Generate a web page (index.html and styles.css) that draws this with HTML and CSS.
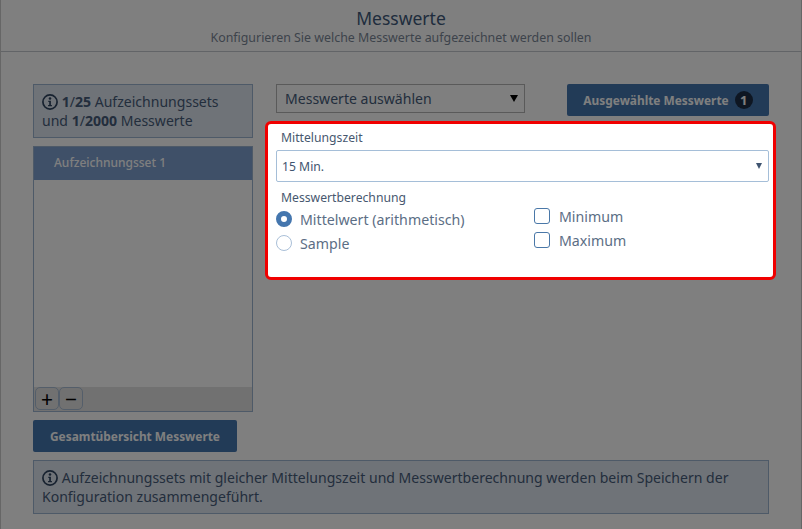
FILE: index.html
```html
<!DOCTYPE html>
<html lang="de">
<head>
<meta charset="utf-8">
<title>Messwerte</title>
<link rel="stylesheet" href="styles.css">
</head>
<body>
<div class="page">
  <header class="head">
    <h1 class="title">Messwerte</h1>
    <p class="subtitle">Konfigurieren Sie welche Messwerte aufgezeichnet werden sollen</p>
  </header>
  <main class="main">
    <div class="cols">
      <aside class="left">
        <div class="info info-top">
          <svg class="info-icon" viewBox="1 1 14 14"><circle cx="8" cy="8" r="6.2" fill="none" stroke="currentColor" stroke-width="1.5"/><circle cx="8" cy="5" r="1.1" fill="currentColor"/><path d="M6.5 7h2.3v3.6h.9v1.1H6.3v-1.1h1V8.1h-.8z" fill="currentColor"/></svg>
          <b>1</b>/<b>25</b> Aufzeichnungssets<br>und <b>1</b>/<b>2000</b> Messwerte
        </div>
        <div class="sets">
          <div class="set-active">Aufzeichnungsset 1</div>
          <div class="set-list"></div>
          <div class="set-foot">
            <button class="sq">+</button><button class="sq">−</button>
          </div>
        </div>
        <button class="btn btn-wide">Gesamtübersicht Messwerte</button>
      </aside>
      <section class="right">
        <div class="top-row">
          <div class="select-plain"><span>Messwerte auswählen</span><span class="caret caret-big"></span></div>
          <button class="btn btn-sel">Ausgewählte Messwerte <span class="badge">1</span></button>
        </div>
        <div class="panel">
          <div class="lbl">Mittelungszeit</div>
          <div class="select-white"><span>15 Min.</span><span class="caret"></span></div>
          <div class="lbl lbl2">Messwertberechnung</div>
          <div class="opts">
            <div class="opt-col">
              <div class="opt"><span class="radio radio-on"></span>Mittelwert (arithmetisch)</div>
              <div class="opt"><span class="radio"></span>Sample</div>
            </div>
            <div class="opt-col col-check">
              <div class="opt opt-c"><span class="check"></span>Minimum</div>
              <div class="opt opt-c"><span class="check"></span>Maximum</div>
            </div>
          </div>
        </div>
      </section>
    </div>
    <div class="info info-bottom">
      <svg class="info-icon" viewBox="1 1 14 14"><circle cx="8" cy="8" r="6.2" fill="none" stroke="currentColor" stroke-width="1.5"/><circle cx="8" cy="5" r="1.1" fill="currentColor"/><path d="M6.5 7h2.3v3.6h.9v1.1H6.3v-1.1h1V8.1h-.8z" fill="currentColor"/></svg>
      Aufzeichnungssets mit gleicher Mittelungszeit und Messwertberechnung werden beim Speichern der Konfiguration zusammengeführt.
    </div>
  </main>
</div>
<div class="overlay"></div>
</body>
</html>
```
FILE: styles.css
```css
* { box-sizing: border-box; }
html, body { margin: 0; padding: 0; height: 100%; }
body {
  background: #fff;
  font-family: "Noto Sans", sans-serif;
  color: #465c7a;
  overflow: hidden;
}
.overlay { position: fixed; inset: 0; background: rgba(0, 0, 0, .5); z-index: 1; }
.page { height: 529px; border-left: 1px solid #ccc; border-right: 1px solid #ccc; }
.head { height: 52px; border-bottom: 1px solid #c4c9cf; text-align: center; padding-top: 7px; }
.title { margin: 0; font-size: 17.5px; line-height: 22px; font-weight: 400; color: #40597a; }
.subtitle { margin: 0; padding-top: 1px; font-size: 12.4px; line-height: 16px; color: #7b8797; }
.main { padding: 32px 32px 0; }
.cols { display: flex; height: 368px; }
.left { width: 220px; flex: none; display: flex; flex-direction: column; }
.right { flex: 1; margin-left: 23px; min-width: 0; }
.info { background: #dfe6f0; border: 1px solid #9db5d0; font-size: 14.05px; line-height: 19px; color: #465c7a; }
.info-top { height: 54px; padding: 7px 8px; }
.info-icon { width: 16px; height: 16px; vertical-align: -3px; color: #2f4560; }
b { font-weight: 700; }
.sets { margin-top: 8px; height: 266px; border: 1px solid #9db5d0; display: flex; flex-direction: column; }
.set-active { height: 33px; background: #7ea0d0; color: #fff; font-size: 12px; font-weight: 500; line-height: 31px; padding-left: 20px; flex: none; }
.set-list { flex: 1; background: #fff; }
.set-foot { height: 24px; background: #e2e2e2; display: flex; padding-left: 1px; }
.sq { width: 24px; height: 23px; padding: 0; border: 1px solid #a9bdd5; border-radius: 5px; background: #e2e2e2; color: #000; font: 400 21px/20px "Noto Sans", sans-serif; }
.btn { border: 0; border-radius: 2px; background: #4476ae; color: #fff; font-family: inherit; font-weight: 700; font-size: 11.9px; padding: 0; }
.btn-wide { margin-top: 8px; width: 204px; height: 32px; }
.top-row { display: flex; justify-content: space-between; align-items: flex-start; height: 37px; }
.select-plain { width: 249px; height: 29px; border: 1px solid #b4b4b4; padding: 0 6px 1px 8px; display: flex; justify-content: space-between; align-items: center; font-size: 14.05px; }
.caret { width: 0; height: 0; border-left: 3.5px solid transparent; border-right: 3.5px solid transparent; border-top: 6px solid #3f5470; }
.caret-big { border-left-width: 4px; border-right-width: 4px; border-top: 7px solid #000; }
.btn-sel { width: 202px; height: 32px; display: flex; align-items: center; justify-content: center; gap: 6px; }
.badge { width: 18px; height: 18px; border-radius: 50%; background: #1d2d44; color: #fff; font-size: 13px; line-height: 18px; text-align: center; }
.panel {
  position: relative; z-index: 2;
  margin: 0 -7px 0 -11px;
  height: 159px;
  background: #fff;
  border: 3px solid #f00000;
  border-radius: 6px;
  padding: 5px 4px 0 8px;
}
.lbl { font-size: 12.2px; line-height: 18px; padding-left: 5px; color: #47586f; }
.select-white { height: 32px; margin-top: 3px; border: 1px solid #a5bed8; border-radius: 2px; padding: 0 6px 0 5px; display: flex; justify-content: space-between; align-items: center; font-size: 12.2px; color: #3f5470; }
.lbl2 { margin-top: 7px; }
.opts { display: flex; }
.opt-col { width: 258px; flex: none; }
.col-check { margin-top: -3px; }
.opt { height: 24px; display: flex; align-items: center; font-size: 14.2px; color: #5c6e85; }
.radio { width: 16px; height: 16px; border-radius: 50%; border: 1px solid #a9bfd8; margin-right: 8px; flex: none; }
.radio-on { border: 5px solid #4476ae; }
.check { width: 16px; height: 16px; border: 1px solid #4a78a8; border-radius: 3px; margin-right: 9px; flex: none; }
.info-bottom { margin-top: 8px; height: 54px; width: 736px; padding: 7px 8px; }
```
